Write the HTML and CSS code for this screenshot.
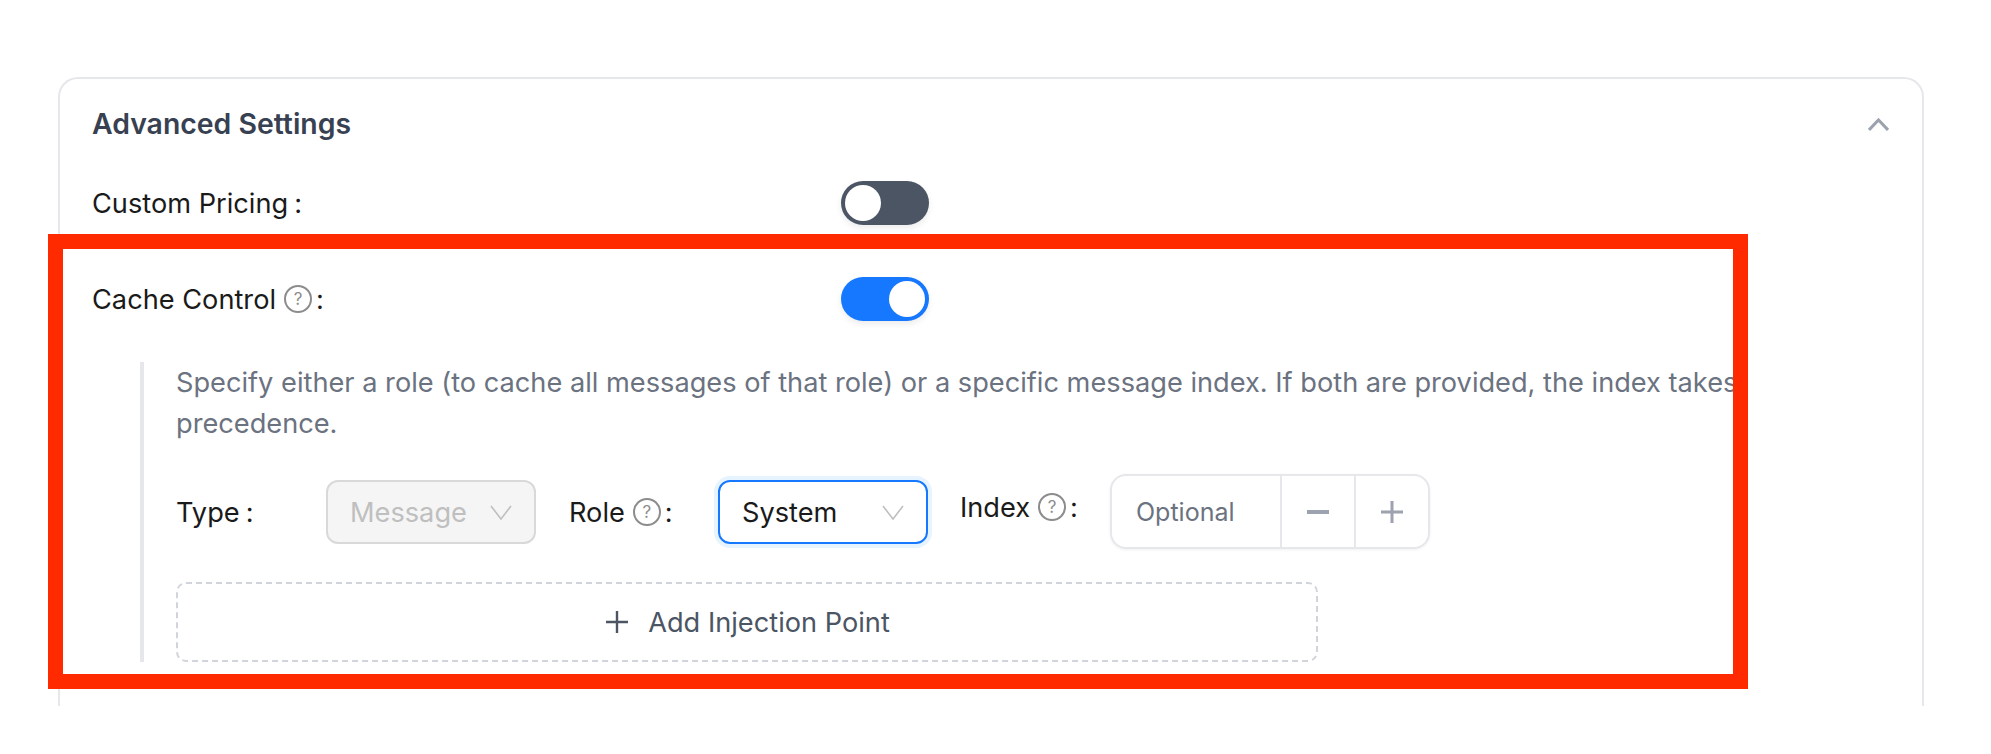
FILE: index.html
```html
<!DOCTYPE html>
<html lang="en">
  <head>
    <meta charset="UTF-8">
    <title>Advanced Settings</title>
    <link rel="stylesheet" href="styles.css">
  </head>
  <body>
    <div class="card">
      <div class="card-head">
        <h2>Advanced Settings</h2>
        <svg class="collapse-icon" width="21" height="14" viewBox="0 0 21 14"><path d="M1 13 L10.5 3 L20 13" fill="none" stroke="#9ca3af" stroke-width="3"/></svg>
      </div>

      <div class="form-row">
        <label class="row-label">Custom Pricing<span class="colon">:</span></label>
        <span class="switch"><span class="knob"></span></span>
      </div>

      <div class="form-row cache-row">
        <label class="row-label">Cache Control<span class="help">?</span><span class="colon">:</span></label>
        <span class="switch on"><span class="knob"></span></span>
      </div>

      <div class="nested">
        <p class="note">Specify either a role (to cache all messages of that role) or a specific message index. If both are provided, the index takes precedence.</p>

        <div class="inject-row">
          <label class="type-label">Type<span class="colon">:</span></label>
          <div class="select disabled">
            <span>Message</span>
            <svg width="22" height="15" viewBox="0 0 22 15"><path d="M1 1 L11 14 L21 1" fill="none" stroke="#bfbfbf" stroke-width="1.6"/></svg>
          </div>
          <label class="role-label">Role<span class="help">?</span><span class="colon">:</span></label>
          <div class="select focused">
            <span>System</span>
            <svg width="22" height="15" viewBox="0 0 22 15"><path d="M1 1 L11 14 L21 1" fill="none" stroke="#bfbfbf" stroke-width="1.6"/></svg>
          </div>
          <label class="index-label">Index<span class="help">?</span><span class="colon">:</span></label>
          <div class="number-input">
            <span class="number-value">Optional</span>
            <span class="number-btn"><svg width="22" height="22" viewBox="0 0 22 22"><path d="M0 11 H22" stroke="#9ca3af" stroke-width="4"/></svg></span>
            <span class="number-btn"><svg width="22" height="22" viewBox="0 0 22 22"><path d="M0 11 H22 M11 0 V22" stroke="#9ca3af" stroke-width="3"/></svg></span>
          </div>
        </div>

        <div class="add-btn">
          <svg width="22" height="22" viewBox="0 0 22 22"><path d="M0 11 H22 M11 0 V22" stroke="#4b5563" stroke-width="2.4"/></svg>
          <span>Add Injection Point</span>
        </div>
      </div>
    </div>

    <!-- annotation drawn over the screenshot -->
    <div class="red-frame"></div>
  </body>
</html>
```

FILE: styles.css
```css
* {
  box-sizing: border-box;
}

body {
  margin: 0;
  height: 754px;
  overflow: hidden;
  background: #fff;
  font-family: Inter, "Liberation Sans", sans-serif;
  font-size: 27.2px;
  color: #1a1a1a;
  padding: 77px 0 0 58px;
  position: relative;
}

.card {
  width: 1866px;
  height: 629px;
  border: 2px solid #e5e7eb;
  border-bottom: none;
  border-radius: 20px 20px 0 0;
  padding: 0 33px 0 32px;
}

.card-head {
  display: flex;
  justify-content: space-between;
  align-items: center;
  height: 89px;
}

.card-head h2 {
  margin: 0;
  font-size: 28.4px;
  font-weight: 600;
  color: #374151;
}

.form-row {
  display: flex;
  align-items: center;
  height: 44px;
  margin-top: 13px;
}

.cache-row {
  margin-top: 52px;
}

.row-label {
  width: 749px;
  display: flex;
  align-items: center;
}

.colon {
  margin-left: 6px;
}

.help {
  width: 28px;
  height: 28px;
  margin-left: 8px;
  border: 2px solid #8c8c8c;
  border-radius: 50%;
  color: #8c8c8c;
  font-size: 17px;
  line-height: 24px;
  text-align: center;
  flex: none;
}

.help + .colon {
  margin-left: 4px;
}

.switch {
  width: 88px;
  height: 44px;
  border-radius: 22px;
  background: #4b5563;
  padding: 4px;
  display: flex;
  box-shadow: 0 3px 6px rgba(0, 0, 0, 0.08);
}

.switch.on {
  background: #1677ff;
  justify-content: flex-end;
}

.knob {
  width: 36px;
  height: 36px;
  border-radius: 50%;
  background: #fff;
}

.nested {
  margin: 41px 0 0 48px;
  width: 1700px;
  height: 300px;
  border-left: 4px solid #e5e7eb;
  padding-left: 32px;
}

.note {
  margin: 0;
  width: 1600px;
  color: #6b7280;
  line-height: 41px;
}

.inject-row {
  display: flex;
  align-items: flex-start;
  margin-top: 36px;
}

.type-label {
  width: 150px;
  height: 64px;
  display: flex;
  align-items: center;
}

.role-label {
  margin-left: 33px;
  width: 149px;
  height: 64px;
  display: flex;
  align-items: center;
}

.index-label {
  margin-left: 32px;
  width: 150px;
  height: 54px;
  display: flex;
  align-items: center;
}

.select {
  width: 210px;
  height: 64px;
  border-radius: 12px;
  border: 2px solid #d9d9d9;
  display: flex;
  align-items: center;
  justify-content: space-between;
  padding: 0 22px;
  flex: none;
}

.select.disabled {
  background: #f5f5f5;
  color: #bfbfbf;
}

.select.focused {
  border-color: #1677ff;
  box-shadow: 0 0 0 4px #e6f4ff;
}

.number-input {
  display: flex;
  width: 320px;
  height: 75px;
  margin-top: -6px;
  border: 2px solid #e5e7eb;
  border-radius: 16px;
  box-shadow: 0 1px 3px rgba(0, 0, 0, 0.06);
}

.number-value {
  width: 168px;
  padding-left: 24px;
  font-size: 25px;
  color: #6b7280;
  line-height: 73px;
}

.number-btn {
  flex: 1;
  display: flex;
  align-items: center;
  justify-content: center;
  border-left: 2px solid #e5e7eb;
}

.add-btn {
  margin-top: 33px;
  width: 1142px;
  height: 80px;
  padding-left: 2px;
  border: 2px dashed #d1d5db;
  border-radius: 10px;
  color: #4b5563;
  display: flex;
  align-items: center;
  justify-content: center;
  gap: 20px;
}

.red-frame {
  position: absolute;
  left: 48px;
  top: 234px;
  width: 1700px;
  height: 455px;
  border: 15px solid #ff2a00;
}
```
